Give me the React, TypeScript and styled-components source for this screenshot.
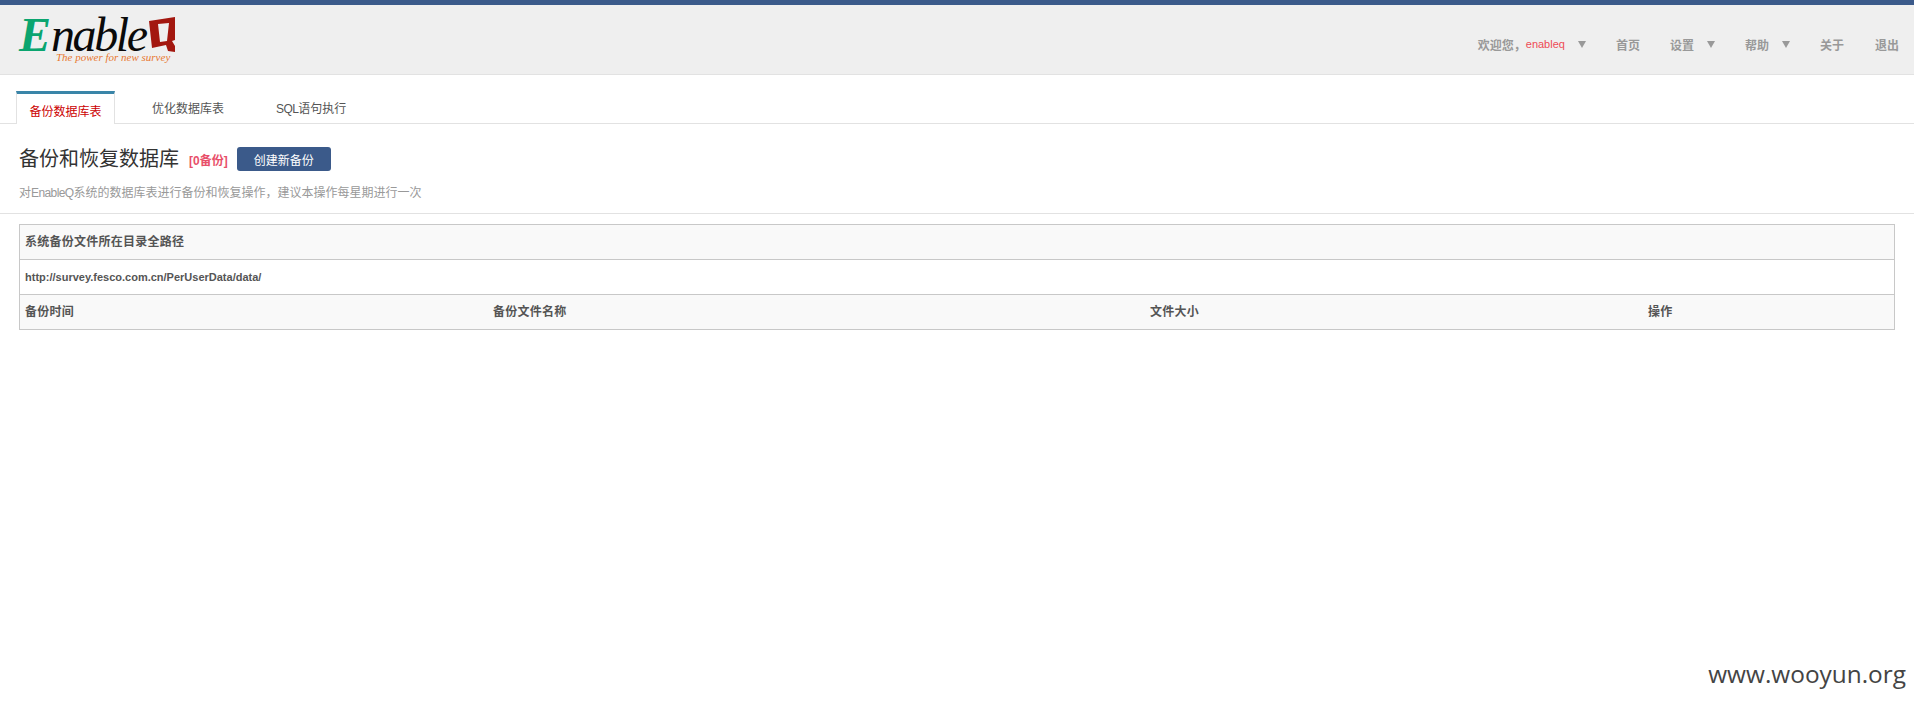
import React, { FC } from 'react'
import styled, { createGlobalStyle } from 'styled-components'

const GlobalStyle = createGlobalStyle`
html, body {
  margin: 0;
  padding: 0;
  background: #fff;
  font-family: "Liberation Sans", "Noto Sans CJK SC", sans-serif;
  font-size: 12px;
  color: #555;
}
`

type NavEntry = { label: string; arrow?: boolean; gap: number }
const navItems: NavEntry[] = [
  { label: '首页', gap: 30 },
  { label: '设置', arrow: true, gap: 30 },
  { label: '帮助', arrow: true, gap: 30 },
  { label: '关于', gap: 31 },
  { label: '退出', gap: 15 },
]

const Logo: FC = () => (
  <LogoWrap>
    <LogoWord>
      <LogoE>E</LogoE>nable
    </LogoWord>
    <LogoQ width="27" height="36" viewBox="0 0 27 36">
      <path
        fill="#a3170f"
        fillRule="evenodd"
        d="M0 4 L26 0 L26 23 L23 24 L26 29 L26 35 L19 34 L17 28 L3 31 Z M9 7 L11 25 L18 24 L20 6 Z"
      />
    </LogoQ>
    <LogoSlogan>The power for new survey</LogoSlogan>
  </LogoWrap>
)

const App: FC = () => (
  <>
    <GlobalStyle />
    <TopStrip />
    <Header>
      <Logo />
      <Nav>
        <Welcome>
          欢迎您，<UserName>enableq</UserName>
          <Arrow />
        </Welcome>
        {navItems.map((item) => (
          <NavItem key={item.label} $gap={item.gap}>
            {item.label}
            {item.arrow && <Arrow />}
          </NavItem>
        ))}
      </Nav>
    </Header>
    <Tabs>
      <Tab $active>备份数据库表</Tab>
      <Tab>优化数据库表</Tab>
      <Tab><Latin>SQL</Latin>语句执行</Tab>
    </Tabs>
    <TitleBlock>
      <TitleRow>
        <Title>备份和恢复数据库</Title>
        <Count>[0备份]</Count>
        <PrimaryButton>创建新备份</PrimaryButton>
      </TitleRow>
      <Description>
        对<Latin>EnableQ</Latin>系统的数据库表进行备份和恢复操作，建议本操作每星期进行一次
      </Description>
    </TitleBlock>
    <Panel>
      <HeadRow>系统备份文件所在目录全路径</HeadRow>
      <PathRow>http://survey.fesco.com.cn/PerUserData/data/</PathRow>
      <ColumnRow>
        <span>备份时间</span>
        <span>备份文件名称</span>
        <span>文件大小</span>
        <span>操作</span>
      </ColumnRow>
    </Panel>
    <Watermark>www.wooyun.org</Watermark>
  </>
)

const TopStrip = styled.div`
  height: 5px;
  background: #3b5a8a;
`
const Header = styled.header`
  height: 69px;
  display: flex;
  justify-content: space-between;
  background: #efefef;
  border-bottom: 1px solid #e2e2e2;
`
const LogoWrap = styled.div`
  position: relative;
  width: 170px;
  height: 60px;
  margin-left: 19px;
`
const LogoWord = styled.div`
  margin-top: 15px;
  font-family: "Liberation Serif", serif;
  font-style: italic;
  font-size: 48px;
  line-height: 30px;
  letter-spacing: -2.4px;
  color: #0a0a0a;
`
const LogoE = styled.span`
  color: #0ba56f;
  font-weight: bold;
  letter-spacing: 0;
`
const LogoQ = styled.svg`
  position: absolute;
  left: 130px;
  top: 12px;
`
const LogoSlogan = styled.div`
  position: absolute;
  left: 37px;
  top: 47px;
  white-space: nowrap;
  font-family: "Liberation Serif", serif;
  font-style: italic;
  font-size: 11px;
  line-height: 10px;
  color: #e8782f;
`
const Nav = styled.nav`
  display: flex;
  align-items: center;
  height: 18px;
  margin-top: 30px;
  font-size: 12px;
  font-weight: bold;
  color: #999;
`
const Welcome = styled.div`
  display: flex;
  align-items: center;
  white-space: nowrap;
  margin-right: 30px;
`
const UserName = styled.span`
  font-size: 11px;
  font-weight: normal;
  color: #ee4b55;
`
const NavItem = styled.div<{ $gap: number }>`
  display: flex;
  align-items: center;
  white-space: nowrap;
  margin-right: ${(p) => p.$gap}px;
`
const Arrow = styled.i`
  width: 0;
  height: 0;
  margin-left: 13px;
  border-left: 4px solid transparent;
  border-right: 4px solid transparent;
  border-top: 7px solid #999;
`
const Tabs = styled.div`
  display: flex;
  height: 49px;
  padding: 16px 0 0 16px;
  box-sizing: border-box;
  border-bottom: 1px solid #e2e2e2;
`
const Tab = styled.div<{ $active?: boolean }>`
  box-sizing: border-box;
  height: 33px;
  width: ${(p) => (p.$active ? '99px' : 'auto')};
  padding: ${(p) => (p.$active ? '0' : '0 26px')};
  margin-right: ${(p) => (p.$active ? '11px' : '0')};
  margin-bottom: -1px;
  line-height: ${(p) => (p.$active ? '36px' : '30px')};
  text-align: center;
  white-space: nowrap;
  background: ${(p) => (p.$active ? '#fff' : 'transparent')};
  color: ${(p) => (p.$active ? '#cc0000' : '#555')};
  border-top: 3px solid ${(p) => (p.$active ? '#3a85a8' : 'transparent')};
  border-left: ${(p) => (p.$active ? '1px solid #e2e2e2' : 'none')};
  border-right: ${(p) => (p.$active ? '1px solid #e2e2e2' : 'none')};
`
const Latin = styled.span`
  letter-spacing: -0.6px;
`
const TitleBlock = styled.div`
  box-sizing: border-box;
  height: 90px;
  padding: 23px 19px 0;
  border-bottom: 1px solid #e2e2e2;
`
const TitleRow = styled.div`
  display: flex;
  align-items: center;
  height: 24px;
`
const Title = styled.h1`
  margin: 0;
  font-size: 20px;
  font-weight: normal;
  line-height: 24px;
  color: #333;
`
const Count = styled.span`
  margin-left: 10px;
  font-size: 12px;
  font-weight: bold;
  color: #e8506a;
`
const PrimaryButton = styled.button`
  width: 94px;
  height: 24px;
  margin-left: 9px;
  padding: 0;
  border: none;
  border-radius: 3px;
  background: #3b5a8a;
  color: #fff;
  font: inherit;
  font-size: 12px;
`
const Description = styled.p`
  margin: 13px 0 0;
  font-size: 12px;
  line-height: 18px;
  color: #999;
`
const Panel = styled.div`
  margin: 10px 19px 0 19px;
  border: 1px solid #c8c8c8;
  border-bottom: none;
`
const Row = styled.div`
  box-sizing: border-box;
  height: 35px;
  padding-left: 5px;
  line-height: 34px;
  border-bottom: 1px solid #c8c8c8;
  font-weight: bold;
  color: #555;
`
const HeadRow = styled(Row)`
  background: #f9f9f9;
  letter-spacing: 0.25px;
`
const PathRow = styled(Row)`
  font-size: 11px;
`
const ColumnRow = styled(Row)`
  display: grid;
  grid-template-columns: 468px 657px 498px 1fr;
  background: #f9f9f9;
  letter-spacing: 0.25px;
`
const Watermark = styled.div`
  position: absolute;
  right: 8px;
  top: 657px;
  font-family: "Open Sans", sans-serif;
  font-size: 24.4px;
  line-height: 34px;
  color: #444;
`

export default App
